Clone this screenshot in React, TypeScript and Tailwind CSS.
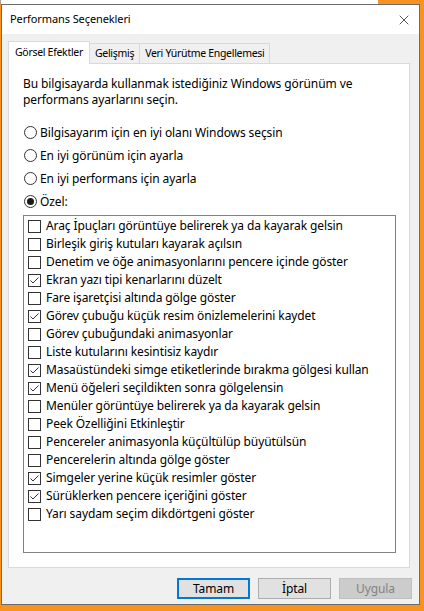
import { X } from "lucide-react";

interface Effect {
  label: string;
  checked: boolean;
}

const EFFECTS: Effect[] = [
  { label: "Araç İpuçları görüntüye belirerek ya da kayarak gelsin", checked: false },
  { label: "Birleşik giriş kutuları kayarak açılsın", checked: false },
  { label: "Denetim ve öğe animasyonlarını pencere içinde göster", checked: false },
  { label: "Ekran yazı tipi kenarlarını düzelt", checked: true },
  { label: "Fare işaretçisi altında gölge göster", checked: false },
  { label: "Görev çubuğu küçük resim önizlemelerini kaydet", checked: true },
  { label: "Görev çubuğundaki animasyonlar", checked: false },
  { label: "Liste kutularını kesintisiz kaydır", checked: false },
  { label: "Masaüstündeki simge etiketlerinde bırakma gölgesi kullan", checked: true },
  { label: "Menü öğeleri seçildikten sonra gölgelensin", checked: true },
  { label: "Menüler görüntüye belirerek ya da kayarak gelsin", checked: false },
  { label: "Peek Özelliğini Etkinleştir", checked: false },
  { label: "Pencereler animasyonla küçültülüp büyütülsün", checked: false },
  { label: "Pencerelerin altında gölge göster", checked: false },
  { label: "Simgeler yerine küçük resimler göster", checked: true },
  { label: "Sürüklerken pencere içeriğini göster", checked: true },
  { label: "Yarı saydam seçim dikdörtgeni göster", checked: false },
];

const OPTIONS = [
  { label: "Bilgisayarım için en iyi olanı Windows seçsin", selected: false },
  { label: "En iyi görünüm için ayarla", selected: false },
  { label: "En iyi performans için ayarla", selected: false },
  { label: "Özel:", selected: true },
];

function Radio({ selected }: { selected: boolean }) {
  return (
    <div className="w-[13px] h-[13px] rounded-full border border-[#333333] bg-white flex items-center justify-center shrink-0">
      {selected && <div className="w-[7px] h-[7px] rounded-full bg-[#1a1a1a]" />}
    </div>
  );
}

function Checkbox({ checked }: { checked: boolean }) {
  return (
    <div className="w-[13px] h-[13px] border border-[#333333] bg-white shrink-0">
      {checked && (
        <svg width="11" height="11" viewBox="0 0 11 11">
          <polyline points="1.5,5.5 4,8 9.5,2.5" fill="none" stroke="#333333" strokeWidth="1" />
        </svg>
      )}
    </div>
  );
}

export default function App() {
  return (
    <div
      className="w-[424px] h-[611px] bg-[#f7931e] overflow-hidden text-[12px] tracking-[-0.1px] text-black"
      style={{ fontFamily: '"Noto Sans", "Open Sans", sans-serif' }}
    >
      {/* page behind the dialog */}
      <div className="h-[4px] w-[378px] bg-white border-l border-[#a0a0a0]" />

      {/* dialog */}
      <div className="ml-[1px] w-[419px] h-[601px] border border-[#6b6b6b] flex flex-col bg-[#f0f0f0]">
        {/* title bar */}
        <div className="h-[29px] bg-white flex items-center justify-between pl-[8px] pr-[7px] shrink-0">
          <span className="text-[11px]">Performans Seçenekleri</span>
          <X size={16} strokeWidth={1} className="text-black" />
        </div>

        <div className="flex-1 px-[6px] flex flex-col">
          {/* tabs */}
          <div className="mt-[6px] h-[23px] flex items-end relative z-10 whitespace-nowrap text-[10.5px] tracking-[-0.3px]">
            <div className="shrink-0 px-[6px] h-[23px] -mb-px bg-white border border-b-0 border-[#d9d9d9] flex items-center">
              Görsel Efektler
            </div>
            <div className="shrink-0 px-[5px] h-[20px] border-t border-r border-[#d9d9d9] flex items-center">
              Gelişmiş
            </div>
            <div className="shrink-0 px-[5px] h-[20px] border-t border-r border-[#d9d9d9] flex items-center">
              Veri Yürütme Engellemesi
            </div>
          </div>

          {/* tab panel */}
          <div className="w-[402px] h-[505px] bg-white border border-[#d9d9d9] pl-[14px] pt-[12px] flex flex-col">
            <p className="leading-[16px]">
              Bu bilgisayarda kullanmak istediğiniz Windows görünüm ve
              <br />
              performans ayarlarını seçin.
            </p>

            <div className="mt-[13px] flex flex-col">
              {OPTIONS.map((opt) => (
                <div key={opt.label} className="h-[23px] flex items-center gap-[3px] pl-[1px]">
                  <Radio selected={opt.selected} />
                  <span>{opt.label}</span>
                </div>
              ))}
            </div>

            {/* effects list */}
            <div className="mt-[2px] w-[373px] h-[338px] border border-[#828282] pt-[1px] pl-[4px] flex flex-col">
              {EFFECTS.map((e) => (
                <div key={e.label} className="h-[18px] flex items-center gap-[5px] whitespace-nowrap">
                  <Checkbox checked={e.checked} />
                  <span>{e.label}</span>
                </div>
              ))}
            </div>
          </div>

          {/* buttons */}
          <div className="mt-[10px] flex justify-end gap-[8px] mr-[1px]">
            <button className="w-[73px] h-[21px] bg-[#e1e1e1] border-2 border-[#0078d7] text-black leading-none">
              Tamam
            </button>
            <button className="w-[73px] h-[21px] bg-[#e1e1e1] border border-[#adadad] text-black leading-none">
              İptal
            </button>
            <button className="w-[73px] h-[21px] bg-[#cccccc] border border-[#bfbfbf] text-[#838383] leading-none">
              Uygula
            </button>
          </div>
        </div>
      </div>
    </div>
  );
}
